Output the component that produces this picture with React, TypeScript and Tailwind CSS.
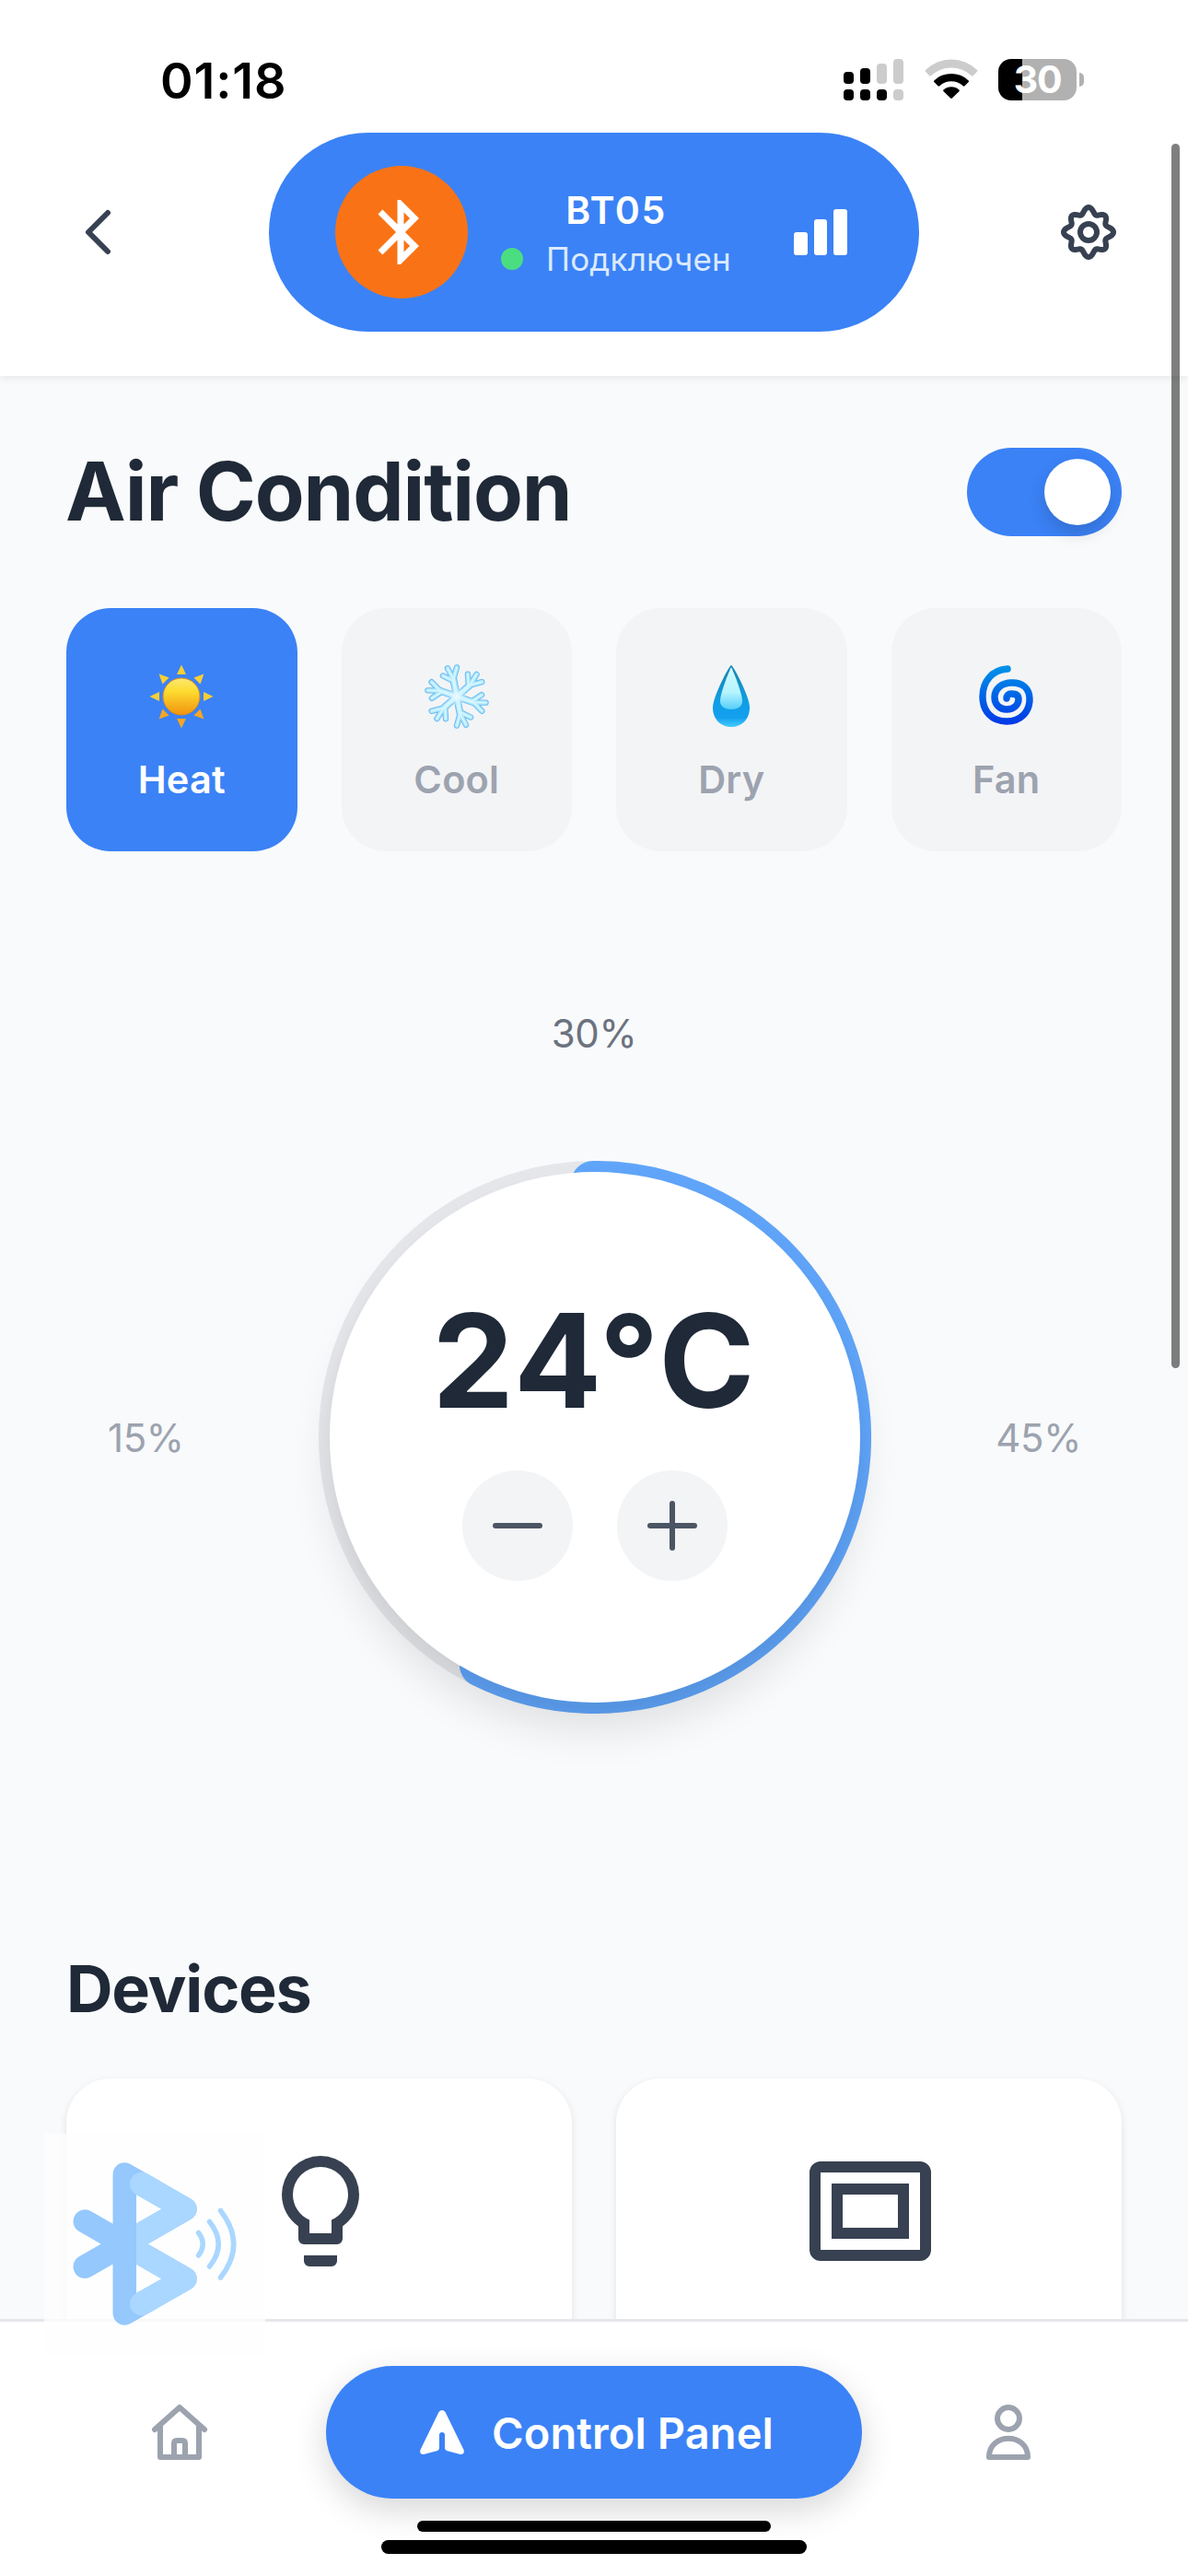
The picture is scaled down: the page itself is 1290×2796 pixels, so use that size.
import { MdBluetooth } from "react-icons/md";

const bars = [
  { h: 13, on: true },
  { h: 17, on: true },
  { h: 22, on: false },
  { h: 27, on: false },
];

function StatusBar() {
  return (
    <div className="flex h-[144px] items-start justify-between pl-[174px] pr-[113px]">
      <div className="mt-[55px] text-[54px] leading-[66px] font-semibold tracking-[0.9px] text-black">01:18</div>
      <div className="mt-[64px] flex items-start">
        <div className="flex gap-[7px]">
          {bars.map((b, i) => (
            <div key={i} className="flex h-[45px] w-[11px] flex-col justify-end gap-[6px]">
              <div className={b.on ? "rounded-[4px] bg-black" : "rounded-[4px] bg-[#cccccc]"} style={{ height: b.h }} />
              <div className={i < 3 ? "h-[12px] rounded-[4px] bg-black" : "h-[12px] rounded-[4px] bg-[#cccccc]"} />
            </div>
          ))}
        </div>
        <svg className="ml-[23px] h-[45px] w-[58px]" viewBox="0 0 58 45" fill="none">
          <path d="M0.8 13.5 Q0.3 12.6 1 11.9 A40 40 0 0 1 57 11.9 Q57.7 12.6 57.2 13.5 L52.8 18.2 Q52 19 51 18.2 A32.5 32.5 0 0 0 7 18.2 Q6 19 5.200 18.200Z" fill="#cccccc" />
          <path d="M10.300 23.400 A27 27 0 0 1 47.700 23.400 Q48.400 24.300 47.700 25 L43.500 29.300 Q42.600 30 41.700 29.200 A18.500 18.500 0 0 0 16.300 29.200 Q15.400 30 14.500 29.300 L10.300 25 Q9.600 24.300 10.300 23.400Z" fill="#000" />
          <path d="M20.600 33.500 A12.500 12.500 0 0 1 37.400 33.500 Q38.200 34.400 37.400 35.300 L29.900 42.600 Q29 43.300 28.100 42.600 L20.600 35.300 Q19.800 34.400 20.600 33.500Z" fill="#000" />
        </svg>
        <div className="ml-[22px] flex items-center gap-[3px]">
          <div className="flex h-[45px] w-[85px] items-center justify-center rounded-[14px] bg-[linear-gradient(90deg,#000_26px,#b1b1b1_26px)] text-[41px] leading-[45px] font-bold tracking-[-1.2px] text-white">
            30
          </div>
          <div className="h-[15px] w-[5px] rounded-r-[5px] bg-[#b1b1b1]" />
        </div>
      </div>
    </div>
  );
}

// Eight-lobed outline sampled from a polar curve; the diagonal lobes are slightly shorter.
const gearPath =
  Array.from({ length: 180 }, (_, i) => {
    const t = (i * Math.PI) / 90;
    const r = 23.2 + 3 * Math.cos(8 * t) + 0.8 * Math.cos(4 * t);
    return `${i ? "L" : "M"}${(36 + r * Math.cos(t)).toFixed(2)} ${(36 + r * Math.sin(t)).toFixed(2)}`;
  }).join(" ") + "Z";

function Header() {
  return (
    <div className="relative z-10 h-[408px] bg-white shadow-[0_3px_9px_rgba(0,0,0,0.07)]">
      <StatusBar />
      <div className="flex h-[216px] items-center justify-between pr-[72px] pl-[72px]">
        <svg className="h-[72px] w-[72px]" viewBox="0 0 72 72" fill="none" stroke="#374151" strokeWidth="6" strokeLinecap="round" strokeLinejoin="round">
          <path d="M45 15 L24 36 L45 57" />
        </svg>
        <div className="flex h-[216px] w-[706px] items-center rounded-full bg-[#3b82f6] pl-[72px]">
          <div className="flex h-[144px] w-[144px] items-center justify-center rounded-full bg-[#f97316] text-white">
            <MdBluetooth size={84} className="mr-[3px]" />
          </div>
          <div className="mt-[4px] ml-9 flex w-[250px] flex-col items-center">
            <div className="text-[41px] leading-[54px] font-semibold tracking-[1.6px] text-white">BT05</div>
            <div className="flex w-full items-center justify-between">
              <div className="h-6 w-6 rounded-full bg-[#4ade80]" />
              <div className="text-[35px] leading-[52px] tracking-[0.2px] whitespace-nowrap text-[#dbeafe]">Подключен</div>
            </div>
          </div>
          <div className="ml-[68px] flex h-[50px] items-end gap-[7px]">
            <div className="h-[25px] w-[14.500px] rounded-[3px] bg-white" />
            <div className="h-[39px] w-[14.500px] rounded-[3px] bg-white" />
            <div className="h-[50px] w-[14.500px] rounded-[3px] bg-white" />
          </div>
        </div>
        <svg className="h-[72px] w-[72px]" viewBox="0 0 72 72" fill="none" stroke="#374151" strokeWidth="6" strokeLinejoin="round">
          <path d={gearPath} />
          <circle cx="36" cy="36" r="9" />
        </svg>
      </div>
    </div>
  );
}

function Sun() {
  return (
    <svg className="h-[72px] w-[72px]" viewBox="-36 -36 72 72">
      <defs>
        <linearGradient id="sun" x1="0" y1="0" x2="0" y2="1">
          <stop offset="0" stopColor="#fbe774" />
          <stop offset="0.35" stopColor="#fddc30" />
          <stop offset="1" stopColor="#f1930f" />
        </linearGradient>
      </defs>
      {[0, 45, 90, 135, 180, 225, 270, 315].map((a) => (
        <path key={a} d="M0 -34.500 L5 -24 L-5 -24Z" fill={a > 90 && a < 270 ? "#f5a623" : "#fbcf33"} transform={`rotate(${a})`} />
      ))}
      <circle r="20" fill="url(#sun)" stroke="#d98a1c" strokeWidth="1" />
    </svg>
  );
}

function Snow() {
  const arms = [-11, 49, 109, 169, 229, 289];
  const layers = [
    { c: "#6dbcf0", w: 6.4 },
    { c: "#b0e9fd", w: 4.4 },
    { c: "#d8f6ff", w: 1.6 },
  ];
  return (
    <svg className="h-[72px] w-[72px]" viewBox="-36 -36 72 72" fill="none" strokeLinecap="round" strokeLinejoin="round">
      <defs>
        <radialGradient id="frost">
          <stop offset="0" stopColor="#eefaff" />
          <stop offset="1" stopColor="#c4efff" stopOpacity="0" />
        </radialGradient>
      </defs>
      {layers.map((s) => (
        <g key={s.c} stroke={s.c}>
          {arms.map((a) => (
            <g key={a} transform={`rotate(${a})`}>
              <path d="M0 0 V-18" strokeWidth={s.w + 1.5} />
              <path d="M0 -19 L-4 -32 M0 -19 L6 -31 M0 -17 L-10.500 -25" strokeWidth={s.w} />
            </g>
          ))}
        </g>
      ))}
      <circle r="11" fill="url(#frost)" />
    </svg>
  );
}

function Drop() {
  return (
    <svg className="h-[72px] w-[72px]" viewBox="0 0 72 72">
      <defs>
        <linearGradient id="drop" x1="0" y1="0" x2="0" y2="1">
          <stop offset="0" stopColor="#1784ae" />
          <stop offset="0.6" stopColor="#0f9fe6" />
          <stop offset="0.85" stopColor="#149fee" />
          <stop offset="1" stopColor="#44ceff" />
        </linearGradient>
        <linearGradient id="shine" x1="0" y1="0" x2="0" y2="1">
          <stop offset="0" stopColor="#d6fbff" />
          <stop offset="0.6" stopColor="#b5f4ff" />
          <stop offset="1" stopColor="#55cdfa" />
        </linearGradient>
      </defs>
      <path d="M36 2 C38 2 56 36 56 48 C56 61 47 69 36 69 C25 69 16 61 16 48 C16 36 34 2 36 2Z" fill="url(#drop)" />
      <path d="M36 4 C38 8 48 32 48 41 C48 47 43 50 36 50 C29 50 24 47 24 41 C24 32 34 8 36 4Z" fill="url(#shine)" />
    </svg>
  );
}

function Swirl() {
  return (
    <svg className="h-[72px] w-[72px]" viewBox="0 0 72 72" fill="none">
      <defs>
        <linearGradient id="swirl" x1="0" y1="0" x2="0" y2="72" gradientUnits="userSpaceOnUse">
          <stop offset="0" stopColor="#0098e8" />
          <stop offset="1" stopColor="#0030e6" />
        </linearGradient>
      </defs>
      <path d="M37 6 C20 7 10 20 10 36 C10 52 20 63 36 63 C52 63 61 52 61 39 C61 27 53 21 42 21 C30 21 23 28 23 37 C23 45 29 50 36 50 C44 50 49 45 49 39 C49 34 45 33 41 33 C38 33 36 35 36 38" stroke="url(#swirl)" strokeWidth="7.4" strokeLinecap="round" />
    </svg>
  );
}

const modes = [
  { label: "Heat", icon: <Sun />, active: true },
  { label: "Cool", icon: <Snow />, active: false },
  { label: "Dry", icon: <Drop />, active: false },
  { label: "Fan", icon: <Swirl />, active: false },
];

function Modes() {
  return (
    <div className="mt-[78px] grid grid-cols-4 gap-[48px]">
      {modes.map((m) => (
        <div key={m.label} className={m.active ? "flex h-[264px] flex-col items-center rounded-[48px] bg-[#3b82f6] pt-[60px] text-white" : "flex h-[264px] flex-col items-center rounded-[48px] bg-[#f3f4f6] pt-[60px] text-[#9ca3af]"}>
          {m.icon}
          <div className="mt-[24px] text-[41.500px] leading-[60px] font-semibold tracking-[0.2px]">{m.label}</div>
        </div>
      ))}
    </div>
  );
}

function Dial() {
  const end = (206.5 * Math.PI) / 180;
  const x = 300 + 276 * Math.sin(end);
  const y = 300 - 276 * Math.cos(end);
  return (
    <div className="mt-[174px] flex flex-col items-center">
      <div className="text-[42px] leading-[48px] tracking-[-0.4px] text-[#6b7280]">30%</div>
      <div className="mt-[114px] flex w-full items-center justify-between px-[45px] tracking-[-0.4px]">
        <div className="w-[100px] text-[42px] text-[#9ca3af]">15%</div>
        <div className="relative h-[600px] w-[600px]">
          <svg className="absolute inset-0 h-full w-full" viewBox="0 0 600 600" fill="none" strokeWidth="48">
            <circle cx="300" cy="300" r="276" stroke="#e5e7eb" />
            <path d={`M298 24 A276 276 0 1 1 ${x} ${y}`} stroke="#60a5fa" strokeLinecap="round" />
          </svg>
          <div className="absolute inset-[12px] flex flex-col items-center rounded-full bg-white shadow-[0_30px_45px_rgba(0,0,0,0.1),0_6px_15px_rgba(0,0,0,0.02)]">
            <div className="mt-[133px] text-[141px] leading-[144px] font-bold tracking-[2.2px] text-[#1f2937]">24°C</div>
            <div className="mt-[47px] flex gap-[48px]">
              <div className="flex h-[120px] w-[120px] items-center justify-center rounded-full bg-[#f3f4f6]">
                <div className="h-[6px] w-[54px] rounded-full bg-[#4b5563]" />
              </div>
              <div className="relative flex h-[120px] w-[120px] items-center justify-center rounded-full bg-[#f3f4f6]">
                <div className="h-[6px] w-[54px] rounded-full bg-[#4b5563]" />
                <div className="absolute h-[54px] w-[6px] rounded-full bg-[#4b5563]" />
              </div>
            </div>
          </div>
        </div>
        <div className="-mr-px w-[100px] text-right text-[42px] text-[#9ca3af]">45%</div>
      </div>
    </div>
  );
}

function Devices() {
  return (
    <div className="mt-[252px]">
      <div className="text-[70px] leading-[94px] font-bold tracking-[-1.2px] text-[#1f2937]">Devices</div>
      <div className="mt-[50px] grid grid-cols-2 gap-[48px]">
        <div className="flex h-[420px] justify-center rounded-[48px] bg-white pt-[72px] pl-[3px] shadow-[0_3px_9px_rgba(0,0,0,0.1)]">
          <svg className="h-[144px] w-[144px]" viewBox="0 0 24 24" fill="#374151">
            <path d="M12,2A7,7 0 0,1 19,9C19,11.38 17.81,13.47 16,14.74V17A1,1 0 0,1 15,18H9A1,1 0 0,1 8,17V14.74C6.19,13.47 5,11.38 5,9A7,7 0 0,1 12,2M9,21V20H15V21A1,1 0 0,1 14,22H10A1,1 0 0,1 9,21M12,4A5,5 0 0,0 7,9C7,11.05 8.23,12.81 10,13.58V16H14V13.58C15.77,12.81 17,11.05 17,9A5,5 0 0,0 12,4Z" />
          </svg>
        </div>
        <div className="flex h-[420px] justify-center rounded-[48px] bg-white pt-[72px] pl-[3px] shadow-[0_3px_9px_rgba(0,0,0,0.1)]">
          <svg className="h-[144px] w-[144px]" viewBox="0 0 24 24" fill="none" stroke="#374151" strokeWidth="2">
            <rect x="2" y="4" width="20" height="16" rx="1" />
            <rect x="6" y="8" width="12" height="8" />
          </svg>
        </div>
      </div>
    </div>
  );
}

function TabBar() {
  return (
    <div className="absolute inset-x-0 bottom-0 z-20 flex h-[279px] flex-col items-center border-t-[3px] border-[#e5e7eb] bg-white pt-[48px]">
      <div className="flex w-full items-center justify-between px-[159px]">
        <svg className="h-[72px] w-[72px]" viewBox="0 0 72 72" fill="none" stroke="#9ca3af" strokeWidth="6" strokeLinecap="round" strokeLinejoin="round">
          <path d="M9 33 L36 9 L63 33 M15 29 V63 H57 V29 M30 62 V48 Q30 45 33 45 H39 Q42 45 42 48 V62" />
        </svg>
        <div className="flex h-[144px] w-[582px] items-center rounded-full bg-[#3b82f6] pl-[102px] shadow-[0_12px_36px_rgba(0,0,0,0.16)]">
          <svg className="h-[48px] w-[48px]" viewBox="0 0 48 48" fill="#fff">
            <path d="M20.500 2 Q24 -2 27.500 2 L47.500 43 Q49 48 44 48 L29 44 Q27 43 27 41 V27 Q27 24 24 24 Q21 24 21 27 V41 Q21 43 19 44 L4 48 Q-1 48 0.500 43Z" />
          </svg>
          <div className="mt-[2px] ml-[30px] text-[47px] leading-[72px] font-semibold tracking-[0.1px] whitespace-nowrap text-white">Control Panel</div>
        </div>
        <svg className="h-[72px] w-[72px]" viewBox="0 0 72 72" fill="none" stroke="#9ca3af" strokeWidth="6" strokeLinejoin="round">
          <circle cx="36" cy="21" r="12" />
          <path d="M15 63 C15 36 57 36 57 63Z" />
        </svg>
      </div>
      <div className="mt-[24px] h-[12px] w-[384px] rounded-full bg-black" />
      <div className="mt-[9px] h-[15px] w-[462px] rounded-full bg-black" />
    </div>
  );
}

function FloatingBluetooth() {
  return (
    <div className="absolute top-[2316px] left-[48px] z-30 h-[240px] w-[240px] bg-[#fefefe]/75">
      <svg className="h-full w-full" viewBox="48 2316 240 240" fill="none" strokeWidth="25.5" strokeLinecap="round" strokeLinejoin="round">
        <path d="M92.300 2411 L201 2473.500 L135.300 2511 V2360 L201 2397.700 L92.300 2460.300" stroke="#95c8fd" />
        <clipPath id="right-half">
          <rect x="148" y="2316" width="90" height="240" />
        </clipPath>
        <g stroke="#aad7ff">
          <path clipPath="url(#right-half)" d="M120 2427 L201 2473.500 L153.700 2500.500 M120 2444 L201 2397.700 L153.700 2370.500" />
          <path d="M153.700 2370.500 L165 2377 M153.700 2500.500 L165 2494" />
          <path strokeWidth="5.5" d="M215.500 2423.500 Q225 2436 215.500 2448 M227.500 2411.500 Q247 2436 227.500 2460 M239.500 2399.500 Q268 2436 239.500 2472" />
        </g>
      </svg>
    </div>
  );
}

export default function App() {
  return (
    <div className="relative h-[2796px] w-[1290px] overflow-hidden bg-[#f9fafb] font-['Inter',sans-serif]">
      <Header />
      <div className="px-[72px] pt-[72px]">
        <div className="flex h-[102px] items-center justify-between">
          <div className="mt-[3px] -ml-px text-[88px] leading-[108px] font-bold tracking-[-1.15px] whitespace-nowrap text-[#1f2937]">Air Condition</div>
          <div className="mt-[6px] flex h-[96px] w-[168px] items-center justify-end rounded-full bg-[#3b82f6] pr-[12px]">
            <div className="h-[72px] w-[72px] rounded-full bg-white shadow-[0_9px_18px_rgba(0,0,0,0.15)]" />
          </div>
        </div>
        <Modes />
        <Dial />
        <Devices />
      </div>
      <TabBar />
      <FloatingBluetooth />
      <div className="absolute top-[156px] right-[9px] z-40 h-[1329px] w-[9px] rounded-full bg-black/50" />
    </div>
  );
}
